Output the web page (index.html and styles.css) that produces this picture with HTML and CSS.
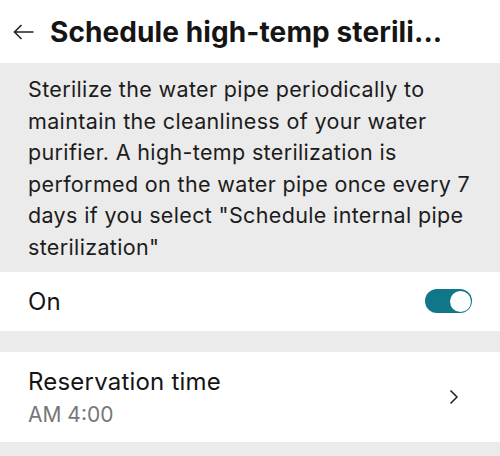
FILE: index.html
```html
<!DOCTYPE html>
<html>
<head>
<meta charset="utf-8">
<link rel="stylesheet" href="styles.css">
</head>
<body>
<div class="page">
  <header class="header">
    <svg class="back" width="22" height="16" viewBox="0 0 22 16"><path d="M20.5 8H1.5M8.5 1L1.5 8l7 7" fill="none" stroke="#222" stroke-width="1.6" stroke-linejoin="miter"/></svg>
    <h1 class="title">Schedule high-temp sterili...</h1>
  </header>
  <p class="desc">Sterilize the water pipe periodically to maintain the cleanliness of your water purifier. A high-temp sterilization is performed on the water pipe once every 7 days if you select "Schedule internal pipe sterilization"</p>
  <div class="row row-on">
    <span class="label">On</span>
    <span class="toggle"><span class="knob"></span></span>
  </div>
  <div class="row row-time">
    <div class="texts">
      <span class="label">Reservation time</span>
      <span class="sub">AM 4:00</span>
    </div>
    <svg class="chev" width="10" height="16" viewBox="0 0 10 16"><path d="M1.5 1.5L8 8l-6.5 6.5" fill="none" stroke="#222" stroke-width="1.5"/></svg>
  </div>
</div>
</body>
</html>
```
FILE: styles.css
```css
html, body { margin: 0; padding: 0; }
body { background: #ebebeb; font-family: Inter, Roboto, "Liberation Sans", sans-serif; color: #1a1a1a; }
.page { width: 500px; height: 456px; overflow: hidden; background: #ebebeb; }
.header { background: #fff; height: 63px; display: flex; align-items: center; padding-left: 13px; box-sizing: border-box; }
.back { flex: none; margin-right: 15px; margin-top: 1px; }
.title { margin: 0; font-size: 28px; font-weight: 700; white-space: nowrap; letter-spacing: 0.1px; color: #151515; }
.desc { margin: 0; padding: 11px 26px 8.4px 28px; font-size: 21.5px; letter-spacing: 0.35px; line-height: 31.6px; color: #1c1c1c; }
.row { background: #fff; display: flex; align-items: center; justify-content: space-between; padding: 0 28px; }
.row-on { height: 59px; }
.row-time { height: 90px; margin-top: 21px; }
.label { font-size: 24px; letter-spacing: 0.2px; color: #151515; }
.texts { display: flex; flex-direction: column; gap: 6px; }
.sub { font-size: 21px; color: #777; }
.toggle { width: 47px; height: 24px; border-radius: 12px; background: #107789; position: relative; }
.knob { position: absolute; right: 1.5px; top: 1.5px; width: 21px; height: 21px; border-radius: 50%; background: #fff; }
.chev { margin-right: 13px; }
```
